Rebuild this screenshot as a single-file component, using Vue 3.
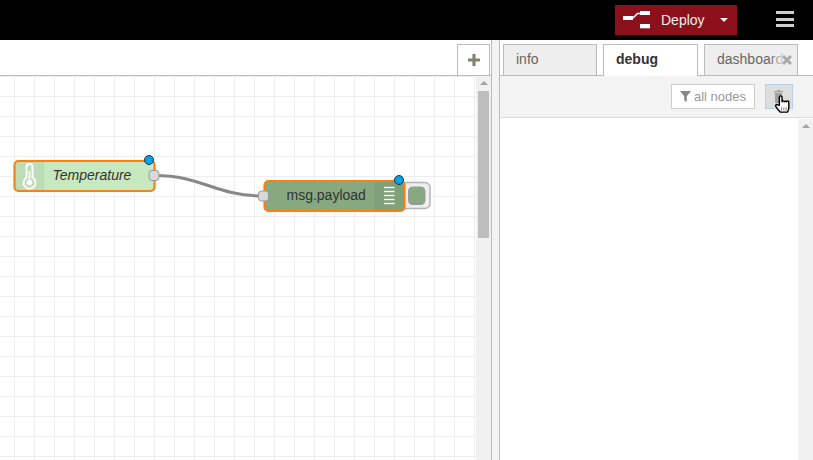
<script setup>
const stackLines = [187, 191, 195, 199, 203]
</script>

<template>
  <div class="app">
    <header class="topbar">
      <div class="deploy">
        <button class="deploy-main">
          <svg class="deploy-icon" width="27" height="18" viewBox="0 0 27 18">
            <path d="M10 7L14.500 2.500H17" class="ln" />
            <rect x="0" y="5" width="10" height="4" fill="#fff" />
            <rect x="17" y="0" width="10" height="4" fill="#fff" />
            <rect x="17" y="13" width="10" height="4.300" fill="#fff" />
          </svg>
          <span>Deploy</span>
        </button>
        <span class="caret"></span>
      </div>
      <div class="burger"><i></i><i></i><i></i></div>
    </header>

    <main class="main">
      <section class="workspace">
        <div class="ws-tabs">
          <button class="add-tab">
            <svg width="14" height="14" viewBox="0 0 14 14"><path d="M1 7h12M7 1v12" stroke="#87816f" stroke-width="3.200" /></svg>
          </button>
        </div>
        <div class="ws-body">
          <div class="canvas">
            <svg width="476" height="384" viewBox="0 76 476 384" class="flow">
              <path d="M154 175.500C204 175.500 214 196 264 196" fill="none" stroke="#888" stroke-width="3" />

              <g>
                <rect x="14.500" y="161" width="140" height="30" rx="4" fill="#c7e9c0" stroke="#ff7f0e" stroke-width="2.200" />
                <path d="M44.500 162H19a3.500 3.500 0 0 0-3.500 3.500v21a3.500 3.500 0 0 0 3.500 3.500h25.500z" fill="#000" fill-opacity=".05" />
                <path d="M26.500 167a3 3 0 0 1 6 0v10.500a6 6 0 1 1-6 0z" fill="none" stroke="#fff" stroke-width="1.900" />
                <path d="M29.500 171v11" stroke="#fff" stroke-width="1.600" />
                <circle cx="29.500" cy="182.500" r="2.800" fill="#fff" />
                <text x="52.500" y="180" class="label italic">Temperature</text>
                <rect x="149" y="170.500" width="10" height="10" rx="3" class="port" />
                <circle cx="149" cy="160" r="4.500" class="dot" />
              </g>

              <g>
                <rect x="400" y="182.500" width="30" height="26" rx="5" fill="#eee" stroke="#b5b5b5" stroke-width="1.500" />
                <rect x="408.500" y="187" width="16.500" height="17.500" rx="4" fill="#87a980" stroke="#999" />
                <rect x="264.500" y="181" width="140" height="30" rx="4" fill="#87a980" stroke="#ff7f0e" stroke-width="2.200" />
                <path d="M374.500 182H400a3.500 3.500 0 0 1 3.500 3.500v21a3.500 3.500 0 0 1-3.500 3.500h-25.500z" fill="#000" fill-opacity=".05" />
                <path v-for="y in stackLines" :key="y" :d="`M384 ${y + 0.5}h10.500`" stroke="#fff" stroke-width="1.400" />
                <text x="286.500" y="200" class="label">msg.payload</text>
                <rect x="258.500" y="191" width="10" height="10" rx="3" class="port" />
                <circle cx="399" cy="180" r="4.500" class="dot" />
              </g>
            </svg>
          </div>
          <div class="ws-scroll">
            <span class="up"></span>
            <span class="thumb"></span>
          </div>
        </div>
      </section>

      <div class="separator"></div>

      <aside class="sidebar">
        <nav class="tabs">
          <div class="tab">info</div>
          <div class="tab active">debug</div>
          <div class="tab last">
            <span class="tab-clip">dashboard</span>
            <span class="fade"></span>
            <svg class="close" width="10" height="10" viewBox="0 0 10 10"><path d="M1 1l8 8M9 1l-8 8" stroke="#aaa" stroke-width="3" /></svg>
          </div>
        </nav>
        <div class="toolbar">
          <button class="filter">
            <svg width="11" height="11" viewBox="0 0 11 11"><path d="M0 0h11L6.800 5.200V11L4.200 9.200V5.200z" fill="#888" /></svg>
            <span>all nodes</span>
          </button>
          <button class="trash">
            <svg class="bin" width="9" height="13" viewBox="0 0 9 13"><path d="M3 1V0h3v1M0 1h9v1.200H0zM1 3h7v10H1z" fill="#a0a0a0" /></svg>
            <svg class="hand" width="17" height="18" viewBox="0 0 18 20">
              <path d="M5.500 11.500V2.500a1.500 1.500 0 0 1 3 0V7.500l.3-.4a1.300 1.300 0 0 1 2.300.3 1.300 1.300 0 0 1 2.200.3 1.300 1.300 0 0 1 2.700.7V14c0 2-.8 4-1.500 5H6.500c-1-1-3.500-4-5-6.300-.8-1.400 1-2.800 2.200-1.700z" fill="#fff" stroke="#000" stroke-width="1.600" stroke-linejoin="round" />
              <path d="M8 14v3M10.500 14v3M13 14v3" stroke="#000" stroke-width="1" stroke-dasharray="1 1" />
            </svg>
          </button>
        </div>
        <div class="log">
          <div class="log-body"></div>
          <div class="log-scroll"><span class="up"></span></div>
        </div>
      </aside>
    </main>
  </div>
</template>

<style>
html, body { margin: 0; height: 100%; overflow: hidden; background: #fff; }
</style>

<style scoped>
.app {
  width: 813px;
  height: 460px;
  display: flex;
  flex-direction: column;
  overflow: hidden;
  font-family: "Liberation Sans", Arial, sans-serif;
  color: #555;
}
button { font: inherit; padding: 0; margin: 0; cursor: pointer; }

.topbar {
  height: 40px;
  flex: none;
  background: #000;
  display: flex;
  justify-content: flex-end;
  align-items: center;
  padding-right: 19px;
  box-sizing: border-box;
}
.deploy {
  width: 122px;
  height: 30px;
  background: #8c101c;
  display: flex;
  align-items: center;
  margin-right: 39px;
}
.deploy-main {
  width: 98px;
  height: 30px;
  background: none;
  border: 0;
  color: #eee;
  font-size: 14px;
  display: flex;
  align-items: center;
  padding-left: 8px;
  box-sizing: border-box;
  gap: 11px;
}
.deploy-icon { flex: none; margin-top: 0; }
.ln { fill: none; stroke: #fff; stroke-width: 1.500; }
.caret {
  margin-left: 7px;
  width: 0;
  height: 0;
  border-left: 4.500px solid transparent;
  border-right: 4.500px solid transparent;
  border-top: 4.500px solid #eee;
}
.burger {
  width: 18px;
  display: flex;
  flex-direction: column;
  gap: 3.500px;
  margin-bottom: 2px;
}
.burger i {
  display: block;
  height: 3px;
  background: #ccc;
}

.main {
  flex: 1;
  display: flex;
  min-height: 0;
}
.workspace {
  width: 492px;
  flex: none;
  box-sizing: border-box;
  display: flex;
  flex-direction: column;
  border-right: 1px solid #bbb;
}
.ws-tabs {
  height: 36px;
  flex: none;
  box-sizing: border-box;
  border-bottom: 1px solid #bbb;
  background: #fff;
  display: flex;
  justify-content: flex-end;
  padding: 4px 1px 0 0;
}
.add-tab {
  width: 33px;
  height: 31px;
  background: #fff;
  border: 1px solid #bbb;
  border-bottom: 0;
  display: flex;
  align-items: center;
  justify-content: center;
}
.ws-body { flex: 1; display: flex; min-height: 0; }
.canvas {
  width: 476px;
  flex: none;
  overflow: hidden;
  background-color: #fff;
  background-image:
    linear-gradient(#eee 1px, transparent 1px),
    linear-gradient(90deg, #eee 1px, transparent 1px);
  background-size: 20px 20px;
  background-position: 14px 0;
}
.flow { display: block; }
.label { font-size: 14px; fill: #333; font-family: "Liberation Sans", Arial, sans-serif; }
.italic { font-style: italic; }
.port { fill: #d9d9d9; stroke: #999; stroke-width: 1; }
.dot { fill: #00a4e8; stroke: #234; stroke-width: 1; }

.ws-scroll {
  width: 15px;
  flex: none;
  background: #f1f1f1;
  display: flex;
  flex-direction: column;
  align-items: center;
}
.up {
  display: block;
  width: 0;
  height: 0;
  margin-top: 5px;
  border-left: 4px solid transparent;
  border-right: 4px solid transparent;
  border-bottom: 4px solid #a3a3a3;
}
.thumb {
  display: block;
  width: 11px;
  height: 147px;
  margin-top: 6px;
  background: #bdbdbd;
}

.separator {
  width: 8px;
  flex: none;
  box-sizing: border-box;
  background: #f3f3f3;
  border-right: 1px solid #bbb;
}

.sidebar {
  flex: 1;
  min-width: 0;
  display: flex;
  flex-direction: column;
  background: #fff;
}
.tabs {
  height: 36px;
  flex: none;
  box-sizing: border-box;
  padding: 4px 0 0 3px;
  display: flex;
  gap: 6px;
  border-bottom: 1px solid #bbb;
  background: #fff;
}
.tab {
  width: 94px;
  height: 31px;
  box-sizing: border-box;
  border: 1px solid #bbb;
  border-bottom: 0;
  background: #eee;
  color: #666;
  font-size: 14px;
  line-height: 29px;
  padding-left: 12px;
  position: relative;
  overflow: hidden;
}
.tab.active {
  background: #fff;
  height: 32px;
  color: #333;
  font-weight: bold;
  width: 95px;
}
.tab-clip { white-space: nowrap; }
.fade {
  position: absolute;
  right: 0;
  top: 0;
  width: 28px;
  height: 100%;
  background: linear-gradient(90deg, rgba(238,238,238,0), #eee 60%);
}
.close { position: absolute; right: 5px; top: 10px; }

.toolbar {
  height: 42px;
  flex: none;
  box-sizing: border-box;
  background: #f3f3f3;
  border-bottom: 1px solid #ddd;
  display: flex;
  align-items: flex-start;
  justify-content: flex-end;
  padding: 8px 20px 0 0;
  gap: 10px;
}
.filter {
  width: 84px;
  height: 25px;
  box-sizing: border-box;
  background: #fff;
  border: 1px solid #ccc;
  color: #999;
  font-size: 13px;
  display: flex;
  align-items: center;
  justify-content: center;
  gap: 3px;
}
.trash {
  width: 28px;
  height: 25px;
  box-sizing: border-box;
  background: #dedede;
  border: 1px dotted #a9bcd6;
  position: relative;
}
.bin { position: absolute; left: 8px; top: 5px; }
.hand { position: absolute; left: 8px; top: 10px; }

.log { flex: 1; display: flex; min-height: 0; }
.log-body { flex: 1; }
.log-scroll {
  width: 15px;
  flex: none;
  margin-top: 1px;
  background: #f1f1f1;
  display: flex;
  flex-direction: column;
  align-items: center;
}
</style>
